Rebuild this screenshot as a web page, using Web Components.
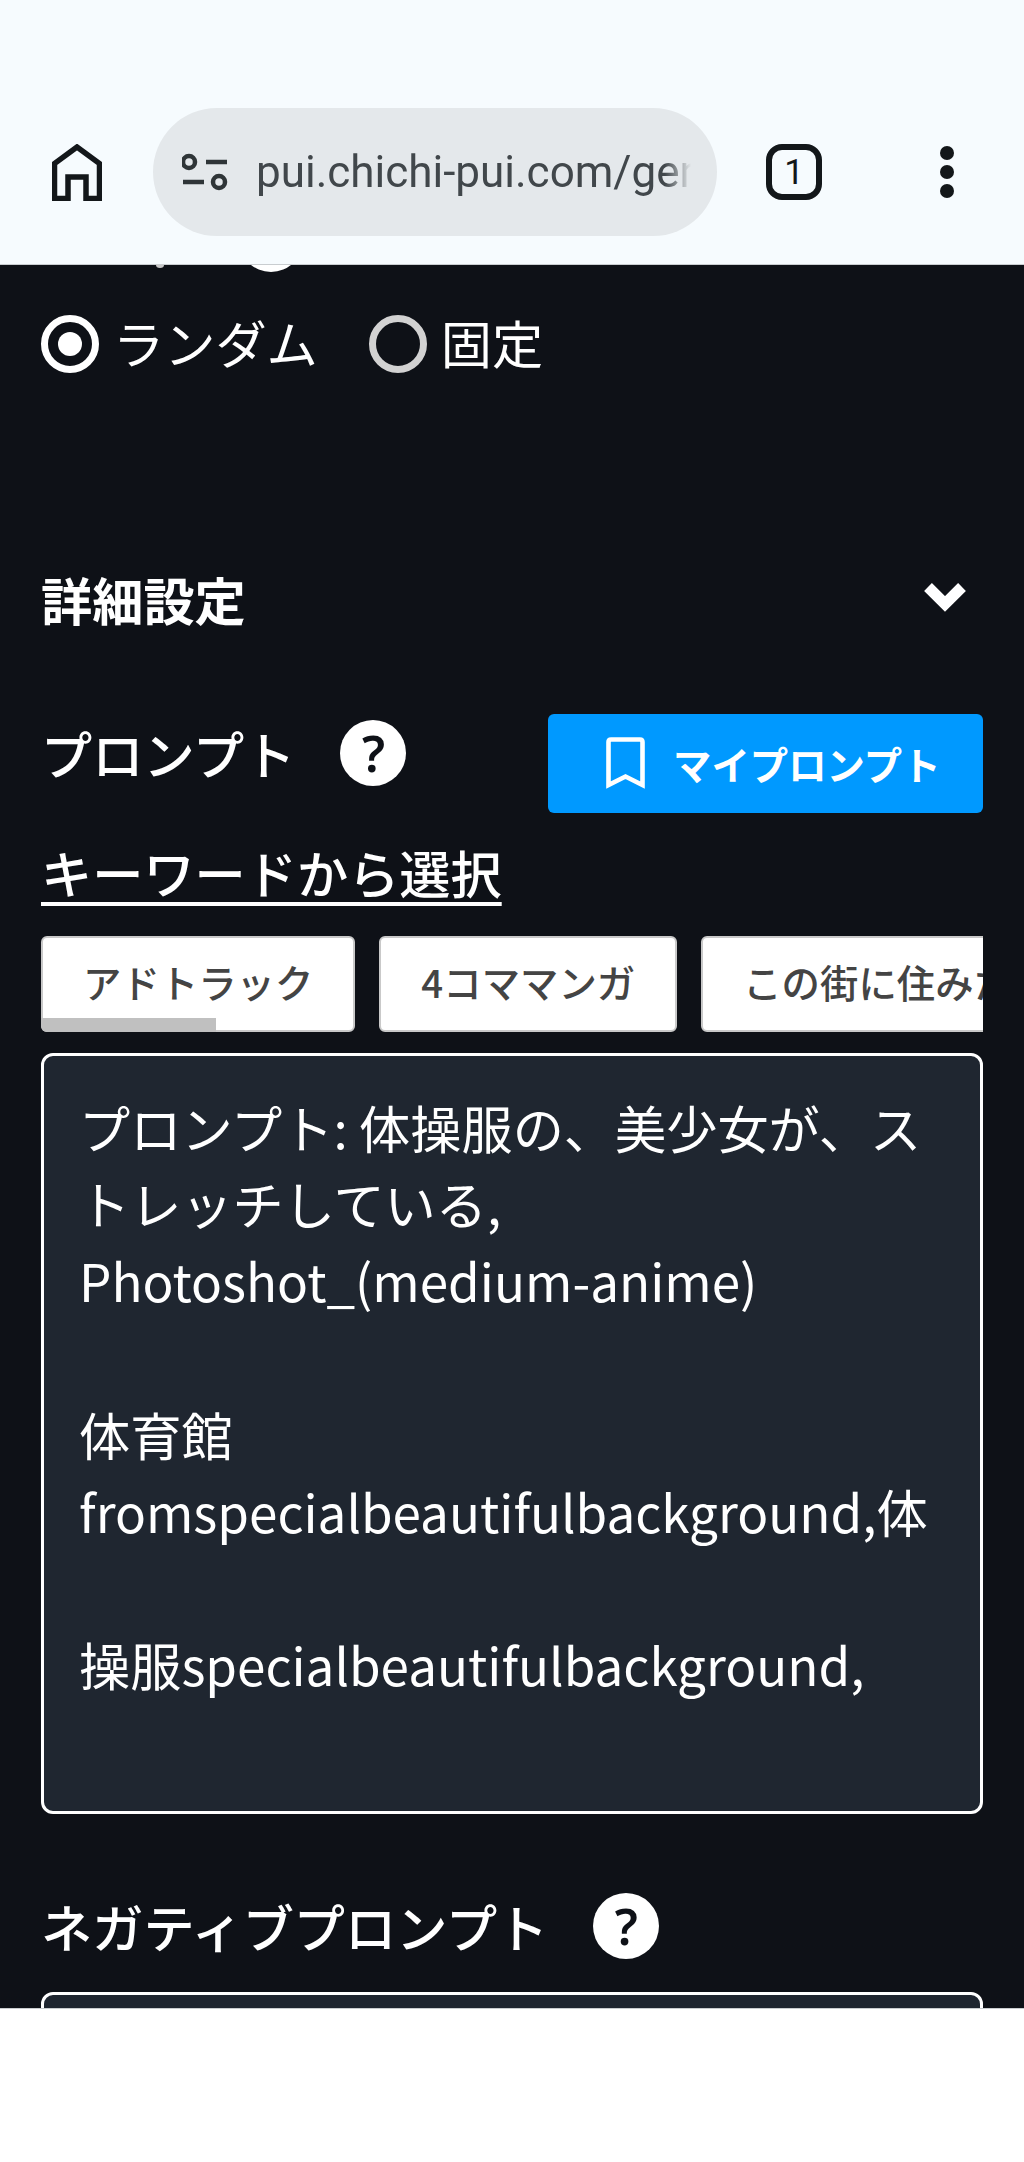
<!DOCTYPE html>
<html lang="ja">
<head>
<meta charset="utf-8">
<title>pui.chichi-pui.com</title>
<style>
  html, body { margin: 0; padding: 0; background: #fff; }
  body { font-family: "Noto Sans CJK JP", "Noto Sans", sans-serif; color: #fff; }
</style>
</head>
<body>
<template id="browser-bar-tpl">
  <style>
    :host { display: flex; align-items: flex-end; height: 264px; background: #f6fbfe; border-bottom: 1px solid #c9cdd0; }
    .row { display: flex; align-items: center; width: 100%; height: 128px; margin-bottom: 28px; }
    .home { width: 50px; height: 57px; margin-left: 52px; flex: none; }
    .pill { display: flex; align-items: center; width: 564px; height: 128px; margin-left: 51px; border-radius: 64px; background: #e4e8eb; flex: none; box-sizing: border-box; padding-left: 29px; }
    .pill svg { width: 48px; height: 40px; flex: none; }
    .url { width: 435px; margin-left: 26px; overflow: hidden; white-space: nowrap; font: 400 44px/1.2 Roboto, sans-serif; color: #41474b;
      -webkit-mask-image: linear-gradient(to right, #000 94%, transparent 100%); mask-image: linear-gradient(to right, #000 94%, transparent 100%); }
    .tab { display: flex; align-items: center; justify-content: center; width: 56px; height: 56px; margin-left: 49px; box-sizing: border-box; border: 6px solid #13171a; border-radius: 16px; font: 400 35px/1 Roboto, sans-serif; color: #13171a; flex: none; }
    .more { display: flex; flex-direction: column; gap: 5px; margin-left: 118px; flex: none; }
    .more i { display: block; width: 14px; height: 14px; border-radius: 50%; background: #13171a; }
  </style>
  <div class="row">
    <svg class="home" viewBox="0 0 50 57" fill="none" stroke="#13171a" stroke-width="5.500" stroke-linejoin="miter">
      <path d="M2.500 54.500V19.500L25 3l22.500 16.500v35H34V33H16v21.500z"/>
    </svg>
    <div class="pill">
      <svg viewBox="0 0 48 40" fill="none" stroke="#2f3538" stroke-width="4.5">
        <circle cx="7" cy="10" r="6"/>
        <path d="M24 10h21M1 30h21"/>
        <circle cx="37" cy="30" r="6"/>
      </svg>
      <div class="url"><slot></slot></div>
    </div>
    <div class="tab">1</div>
    <div class="more"><i></i><i></i><i></i></div>
  </div>
</template>

<template id="radio-option-tpl">
  <style>
    :host { display: inline-flex; align-items: center; gap: 14px; font-size: 51.2px; line-height: 1.3; color: #fff; }
    .mark { width: 58px; height: 58px; box-sizing: border-box; border-radius: 50%; border: 7px solid #d2d2d2; flex: none; display: flex; align-items: center; justify-content: center; }
    .label { margin-top: -4px; }
    :host([checked]) .mark { border-color: #fff; }
    :host([checked]) .mark::after { content: ""; width: 24px; height: 24px; border-radius: 50%; background: #fff; }
  </style>
  <span class="mark"></span><span class="label"><slot></slot></span>
</template>

<template id="help-badge-tpl">
  <style>
    :host { display: inline-flex; align-items: center; justify-content: center; width: 66px; height: 66px; border-radius: 50%; background: #fff; color: #0e1117; font: 600 50px/1 "Noto Sans", sans-serif; flex: none; }
  </style>
  ?
</template>

<template id="field-title-tpl">
  <style>
    :host { display: flex; align-items: center; gap: 45px; font-size: 51.2px; font-weight: 500; line-height: 1.3; color: #fff; white-space: nowrap; }
  </style>
  <slot></slot><help-badge></help-badge>
</template>

<template id="my-prompt-button-tpl">
  <style>
    :host { display: flex; align-items: center; width: 435px; height: 99px; box-sizing: border-box; padding-left: 58px; gap: 28px; background: #0099ff; border-radius: 6px; color: #fff; font-size: 38.4px; font-weight: 700; white-space: nowrap; flex: none; }
    svg { width: 39px; height: 52px; flex: none; }
  </style>
  <svg viewBox="0 0 39 52" fill="none" stroke="#fff" stroke-width="4.600" stroke-linejoin="miter"><path d="M2.500 48V5q0-2.500 2.500-2.500h29q2.500 0 2.500 2.500v43l-17-8.500z"/></svg>
  <slot></slot>
</template>

<template id="keyword-chip-tpl">
  <style>
    :host { display: flex; align-items: center; justify-content: center; height: 96px; box-sizing: border-box; padding: 0 40px 6px; background: #fff; border: 2px solid #c9c9c9; border-radius: 6px; color: #444; font-size: 38.4px; font-weight: 500; white-space: nowrap; flex: none; }
  </style>
  <slot></slot>
</template>

<template id="chip-rail-tpl">
  <style>
    :host { display: block; position: relative; height: 96px; overflow: hidden; }
    .rail { display: flex; gap: 24px; }
    .thumb { position: absolute; left: 0; bottom: 0; width: 175px; height: 14px; background: #c0c0c0; border-radius: 0 0 0 6px; }
  </style>
  <div class="rail"><slot></slot></div>
  <div class="thumb"></div>
</template>

<template id="prompt-box-tpl">
  <style>
    :host { display: block; box-sizing: border-box; background: #1f2630; border: 3px solid #fff; border-radius: 12px; padding: 33px 35px 0; font-size: 51.2px; line-height: 1.5; color: #fff; overflow: hidden; }
    .text { white-space: pre; }
  </style>
  <div class="text"><slot></slot></div>
</template>

<template id="settings-page-tpl">
  <style>
    :host { display: block; height: 1743px; overflow: hidden; background: #0e1117; border-bottom: 1px solid #c9cdd0; }
    .wrap { padding: 0 41px; }
    .peek { height: 8px; position: relative; overflow: hidden; }
    .peek i { position: absolute; left: 198px; top: -57px; width: 64px; height: 64px; border-radius: 50%; background: #fff; }
    .peek b { position: absolute; left: 115px; top: -3px; width: 8px; height: 6px; border-radius: 50%; background: #c8c8c8; }
    .radios { display: flex; gap: 51px; margin-top: 40px; align-items: center; }
    .detail { display: flex; justify-content: space-between; align-items: center; margin-top: 189px; font-size: 51.2px; font-weight: 700; line-height: 68px; }
    .detail svg { width: 44px; height: 32px; margin-right: 16px; margin-top: -6px; }
    .prompt-head { display: flex; justify-content: space-between; align-items: flex-start; margin-top: 81px; }
    .prompt-head field-title { margin-top: 6px; }
    .kw { margin-top: 26px; font-size: 51.2px; font-weight: 500; line-height: 66px; text-decoration: underline; text-decoration-thickness: 4px; text-underline-offset: 8px; }
    chip-rail { margin-top: 31px; }
    prompt-box.main { margin-top: 21px; height: 761px; }
    .neg { margin-top: 79px; }
    prompt-box.neg-box { margin-top: 33px; height: 100px; }
  </style>
  <div class="wrap">
    <div class="peek"><b></b><i></i></div>
    <div class="radios">
      <radio-option checked>ランダム</radio-option>
      <radio-option>固定</radio-option>
    </div>
    <div class="detail">
      <span>詳細設定</span>
      <svg viewBox="0 0 44 32" fill="none" stroke="#fff" stroke-width="11"><path d="M5 7l17 17L39 7"/></svg>
    </div>
    <div class="prompt-head">
      <field-title>プロンプト</field-title>
      <my-prompt-button>マイプロンプト</my-prompt-button>
    </div>
    <div class="kw">キーワードから選択</div>
    <chip-rail>
      <keyword-chip>アドトラック</keyword-chip>
      <keyword-chip>4コママンガ</keyword-chip>
      <keyword-chip>この街に住みた</keyword-chip>
    </chip-rail>
    <prompt-box class="main"><slot></slot></prompt-box>
    <field-title class="neg">ネガティブプロンプト</field-title>
    <prompt-box class="neg-box"></prompt-box>
  </div>
</template>

<browser-bar>pui.chichi-pui.com/gen</browser-bar>
<settings-page>プロンプト: 体操服の、美少女が、ス
トレッチしている,
Photoshot_(medium-anime)

体育館
fromspecialbeautifulbackground,体

操服specialbeautifulbackground,</settings-page>

<script>
// every element just clones its template into an open shadow root
function register(tag) {
  customElements.define(tag, class extends HTMLElement {
    constructor() {
      super();
      this.attachShadow({ mode: 'open' });
      const tpl = document.getElementById(tag + '-tpl');
      this.shadowRoot.appendChild(tpl.content.cloneNode(true));
    }
  });
}

['help-badge', 'field-title', 'radio-option', 'my-prompt-button', 'keyword-chip',
 'chip-rail', 'prompt-box', 'browser-bar', 'settings-page'].forEach(register);
</script>
</body>
</html>
